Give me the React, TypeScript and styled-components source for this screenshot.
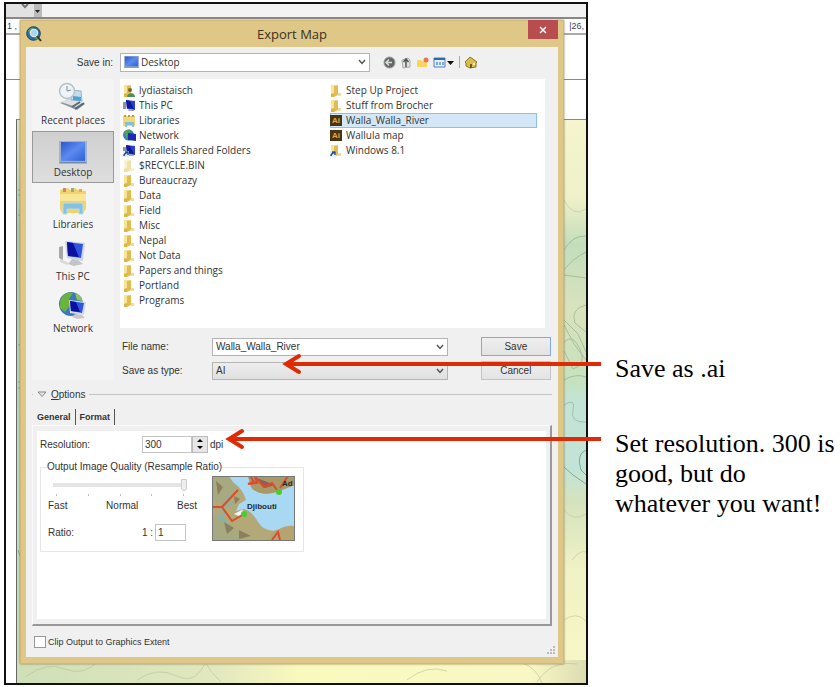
import React from "react";
import styled, { createGlobalStyle, css } from "styled-components";

const ui = `"Open Sans", "Noto Sans", sans-serif`;
const form = `"Liberation Sans", Arial, sans-serif`;

const Global = createGlobalStyle`
  *, *::before, *::after { box-sizing: border-box; }
  body { margin: 0; background: #fff; color: #333; font-family: ${form}; font-size: 10px; }
  button, input, select { font: inherit; color: inherit; margin: 0; padding: 0; }
  ul { list-style: none; margin: 0; padding: 0; }
`;

const Page = styled.main`
  display: grid;
  grid-template-columns: minmax(0, 584fr) minmax(0, 225fr);
  column-gap: 27px;
  align-items: start;
  padding: 2px 0 2px 4px;
`;

const Figure = styled.section`
  position: relative;
  border: 2px solid #111;
  padding: 16px 22px 19px 14px;
  overflow: hidden;
`;

/* Application behind the dialog */
const Backdrop = styled.div`
  position: absolute;
  inset: 0;
  display: flex;
  flex-direction: column;
  background: #fff;
`;
const AppBar = styled.div`
  display: flex;
  height: 15px;
  background: #f3f3f3;
  border-bottom: 2px solid #888;
`;
const AppTool = styled.div`
  display: flex;
  justify-content: center;
  width: 28px;
  padding-left: 10px;
  background: #e2e2e2;
`;
const AppGrip = styled.div`
  display: flex;
  align-items: center;
  width: 8px;
  background: #bbb;
`;
const Ruler = styled.div`
  display: flex;
  justify-content: space-between;
  height: 16px;
  padding: 0 2px 0 1px;
  border-bottom: 2px solid #aaa;
  font-size: 9px;
  line-height: 14px;
  color: #444;
`;
const Guide = styled.div`
  height: 45px;
  border-bottom: 1px solid #888;
`;
const Canvas = styled.div`
  flex: 1;
  display: flex;
  padding: 39px 0 0 10px;
  min-height: 0;
`;
const Terrain = styled.svg`
  flex: 1;
  min-width: 0;
  height: 100%;
  border-top: 1px solid #888;
  border-left: 1px solid #666;
`;

/* Dialog */
const Dialog = styled.div`
  position: relative;
  padding: 0 6px 7px;
  background: #dfc788;
  box-shadow: inset 0 0 0 1px #d2b878, 0 0 2px #8a7b55;
`;
const TitleBar = styled.header`
  display: grid;
  grid-template-columns: 30px 1fr 30px;
  height: 27px;
  align-items: center;
`;
const Title = styled.h1`
  margin: 0;
  text-align: center;
  font: 400 13px/20px ${ui};
  color: #3a3222;
`;
const Close = styled.button`
  align-self: start;
  height: 19px;
  border: 0;
  background: #b84c4f;
  display: grid;
  place-items: center;
`;
const Body = styled.div`
  background: #f0f0f0;
  padding: 5px 6px 6px;
`;
const Location = styled.div`
  display: flex;
  align-items: center;
  height: 20px;
`;
const LocationLabel = styled.label`
  width: 88px;
  padding-right: 7px;
  text-align: right;
`;
const Field = styled.div<{ $shade?: boolean; $h?: number }>`
  display: flex;
  align-items: center;
  height: ${(p) => p.$h ?? 18}px;
  padding: 0 3px 0 3px;
  border: 1px solid #b4b4b4;
  background: ${(p) => (p.$shade ? "linear-gradient(#ededed, #e0e0e0)" : "#fff")};
`;
const LocationField = styled(Field)`
  flex: 0 1 250px;
  min-width: 0;
  gap: 2px;
  font-family: ${ui};
`;
const bare = css`
  appearance: none;
  border: 0;
  outline: 0;
  background: none;
  flex: 1;
  min-width: 0;
`;
const BareSelect = styled.select`${bare}`;
const BareInput = styled.input`${bare}`;
const IconButton = styled.button`
  display: grid;
  place-items: center;
  border: 0;
  background: none;
`;
const Tools = styled.div`
  display: flex;
  align-items: center;
  gap: 4px;
  padding-left: 13px;
`;
const Divider = styled.span`
  width: 1px;
  height: 12px;
  background: #aaa;
`;

const Browser = styled.div`
  display: grid;
  grid-template-columns: 82px minmax(0, 1fr);
  column-gap: 6px;
  margin-top: 7px;
`;
const Places = styled.nav`
  display: flex;
  flex-direction: column;
  background: #f4f4f4;
`;
const Place = styled.button<{ $on?: boolean }>`
  display: flex;
  flex-direction: column;
  align-items: center;
  justify-content: flex-end;
  gap: 1px;
  height: 52px;
  padding-bottom: 2px;
  border: 1px solid ${(p) => (p.$on ? "#999" : "transparent")};
  background: ${(p) => (p.$on ? "linear-gradient(#cfcfcf, #dedede)" : "none")};
  font: 400 10px/15px ${ui};
  white-space: nowrap;
`;
const Files = styled.div`
  display: grid;
  grid-template-columns: 207px 207px;
  align-content: start;
  min-height: 249px;
  margin-right: 7px;
  padding: 4px 0 0 3px;
  background: #fff;
  overflow: hidden;
`;
const FileItem = styled.button<{ $on?: boolean }>`
  display: flex;
  align-items: center;
  gap: 3px;
  width: 100%;
  height: 15px;
  border: 0;
  background: ${(p) => (p.$on ? "#d3e7f6" : "none")};
  box-shadow: ${(p) => (p.$on ? "inset 0 0 0 1px #8cc0e6" : "none")};
  font: 400 10px/15px ${ui};
  text-align: left;
  white-space: nowrap;
`;
const SaveForm = styled.div`
  display: grid;
  grid-template-columns: 90px minmax(0, 235fr) minmax(0, 103fr);
  row-gap: 5px;
  align-items: center;
  padding: 9px 1px 0 2px;
`;
const Action = styled.button<{ $primary?: boolean }>`
  height: 19px;
  margin-left: 33px;
  border: 1px solid ${(p) => (p.$primary ? "#7eaae0" : "#c4c4c4")};
  background: linear-gradient(#efefef, #e3e3e3);
`;

const OptionsBar = styled.div`
  display: flex;
  align-items: center;
  gap: 4px;
  height: 14px;
  margin-top: 7px;
  &::before { content: ""; width: 1px; height: 1px; background: #ccc; }
  &::after { content: ""; flex: 1; height: 1px; background: #c4c4c4; }
`;
const OptionsToggle = styled.button`
  display: flex;
  align-items: center;
  gap: 4px;
  border: 0;
  background: none;
`;
const Tabs = styled.div`
  display: flex;
  margin-top: 8px;
  padding-left: 1px;
`;
const Tab = styled.button`
  height: 16px;
  padding: 0 4px;
  border: 0;
  border-right: 1px solid #555;
  background: none;
  font-size: 9px;
  font-weight: 700;
`;
const Panel = styled.div`
  padding: 5px 4px;
  border: 1px solid #fafafa;
  border-right: 2px solid #999;
  border-bottom: 2px solid #999;
`;
const Sheet = styled.div`
  min-height: 188px;
  padding: 4px 3px;
  background: #fff;
`;
const Resolution = styled.div`
  display: flex;
  align-items: center;
  height: 18px;
`;
const ResolutionLabel = styled.label`
  width: 102px;
`;
const NumberInput = styled.input<{ $w: number }>`
  width: ${(p) => p.$w}px;
  height: 17px;
  padding-left: 2px;
  border: 1px solid #c4c4c4;
  background: #fff;
`;
const Spinner = styled.div`
  display: flex;
  flex-direction: column;
  width: 16px;
  height: 17px;
  margin-right: 2px;
  border: 1px solid #bbb;
  background: #e6e6e6;
`;
const Step = styled(IconButton)`
  flex: 1;
`;
const Quality = styled.fieldset`
  display: flex;
  justify-content: space-between;
  width: 264px;
  margin: 8px 0 0;
  padding: 3px 8px 10px 6px;
  border: 1px solid #e6e6e6;
`;
const Legend = styled.legend`
  height: 12px;
  padding: 0;
  line-height: 12px;
`;
const QualityControls = styled.div`
  width: 152px;
`;
const Slider = styled.input`
  appearance: none;
  display: block;
  width: 134px;
  height: 12px;
  margin: 3px 0 0 6px;
  background: linear-gradient(#e4e4e4, #e4e4e4) center / 100% 4px no-repeat;
  &::-webkit-slider-thumb {
    appearance: none;
    width: 6px;
    height: 12px;
    border: 1px solid #ccc;
    border-radius: 0 0 3px 3px;
    background: #eee;
  }
`;
const Ticks = styled.div`
  display: flex;
  justify-content: space-between;
  width: 128px;
  margin: 3px 0 0 9px;
  span { width: 1px; height: 2px; background: #bbb; }
`;
const Scale = styled.div`
  display: flex;
  justify-content: space-between;
  margin-top: 4px;
  padding: 0 2px 0 1px;
  line-height: 12px;
`;
const Ratio = styled.div`
  display: grid;
  grid-template-columns: 94px 13px 31px;
  align-items: center;
  margin-top: 12px;
  padding-left: 1px;
`;
const Clip = styled.label`
  display: flex;
  align-items: center;
  gap: 2px;
  padding-left: 2px;
  font-size: 9px;
`;
const Check = styled.input`
  appearance: none;
  width: 12px;
  height: 12px;
  border: 1px solid #999;
  background: #fff;
`;
const ClipRow = styled.div`
  display: flex;
  align-items: flex-end;
  justify-content: space-between;
  height: 25px;
  padding-bottom: 3px;
`;
const Grip = styled.svg`
  margin: 0 -4px -7px 0;
`;

/* Callouts */
const Notes = styled.aside`
  display: flex;
  flex-direction: column;
  gap: 45px;
  padding-top: 352px;
  font: 400 26px/30px "Liberation Serif", "Times New Roman", serif;
  color: #000;
`;
const Note = styled.p`
  position: relative;
  margin: 0;
`;
const Arrow = styled.svg`
  position: absolute;
  right: calc(100% + 14px);
  top: -1px;
`;

const Chevron = () => (
  <svg width="8" height="6" viewBox="0 0 8 6"><path d="M1 1l3 3.4L7 1" fill="none" stroke="#555" strokeWidth="1.5" /></svg>
);
const Globe = () => (
  <svg width="16" height="16" viewBox="0 0 16 16">
    <circle cx="7.5" cy="7.5" r="6.8" fill="#2c6f9e" stroke="#23425a" />
    <path d="M2 5c2-3 4-4 6-3l-2 3-2 3zM9 11l3-2 1 2-3 3z" fill="#5ca06b" />
    <circle cx="8" cy="7" r="3.8" fill="#a9d3ee" stroke="#e8f2f8" />
    <path d="M11 10l4 5" stroke="#333" strokeWidth="2" />
  </svg>
);

type Kind = "folder" | "faded" | "user" | "pc" | "library" | "network" | "shared" | "ai" | "link";
const FolderShape = ({ fade }: { fade?: boolean }) => (
  <g opacity={fade ? 0.45 : 1}>
    <path d="M1 1h5v11H1z" fill="#f7e496" />
    <path d="M4 2l4-1v10l-4 2z" fill="#dfbd50" />
    <path d="M1 10l3-1v4H1z" fill="#d9b54a" />
    <path d="M8 9h3v3H8z" fill="#ecdc9d" />
  </g>
);
const Monitor = () => (
  <g>
    <path d="M0 3h3v7H0z" fill="#8b94ac" />
    <path d="M3 1l9 1v9l-8-1z" fill="#2c40d0" />
    <path d="M3 1l4 1 4 8-7-1z" fill="#10189a" />
    <path d="M6 10l5 1v1H5z" fill="#aaa" />
  </g>
);
const FileIcon = ({ kind }: { kind: Kind }) => (
  <svg width="13" height="14" viewBox="0 0 13 14">
    {(kind === "folder" || kind === "faded" || kind === "user" || kind === "link") && <FolderShape fade={kind === "faded"} />}
    {kind === "user" && <g><circle cx="7" cy="6" r="2" fill="#7a6238" /><path d="M4 13c0-5 8-5 8 0z" fill="#4f8f5f" /></g>}
    {kind === "link" && <g><path d="M0 7h6v6H0z" fill="#e8eefa" /><path d="M1 12c0-2 1-3 4-4M2 8h3v3" fill="none" stroke="#234c9c" strokeWidth="1.5" /></g>}
    {kind === "pc" && <Monitor />}
    {kind === "shared" && <g><Monitor /><path d="M0 7h6v6H0z" fill="#e8eefa" /><path d="M1 12c0-2 1-3 4-4M2 8h3v3" fill="none" stroke="#234c9c" strokeWidth="1.5" /></g>}
    {kind === "library" && <g><path d="M0 2h12v10H0z" fill="#efd97f" /><path d="M1 1h2v2H1zM5 1h2v2H5zM9 1h2v2H9z" fill="#b99b48" /><path d="M2 13V8h9v5H9v-2H4v2z" fill="#85bddb" /></g>}
    {kind === "network" && <g><circle cx="5.5" cy="6" r="5.5" fill="#3a84b5" /><path d="M1 4c2-4 6-4 7-3L5 5 4 9z" fill="#55a24f" /><path d="M5 4l8 1v7l-8-1z" fill="#1c2bb0" /></g>}
    {kind === "ai" && <g><path d="M0 1h12v11H0z" fill="#4b3510" /><text x="2" y="9" fontFamily="Liberation Sans" fontSize="8" fontWeight="700" fill="#e5a54b">Ai</text></g>}
  </svg>
);
const DesktopIcon = ({ w, h }: { w: number; h: number }) => (
  <svg width={w} height={h} viewBox="0 0 28 22" preserveAspectRatio="none">
    <defs><linearGradient id="desk" x2="1" y2="1"><stop stopColor="#2d55c8" /><stop offset=".5" stopColor="#5b8bf0" /><stop offset="1" stopColor="#2f5fd4" /></linearGradient></defs>
    <path d="M0 0h28v22H0z" fill="#9fb3cf" /><path d="M2 1h24v18H2z" fill="url(#desk)" /><path d="M1 20h26v1H1z" fill="#6f87a8" />
  </svg>
);
const RecentIcon = () => (
  <svg width="30" height="30" viewBox="0 0 30 30">
    <path d="M2 21l9-4 16 5-8 6z" fill="#8d979d" /><path d="M3 20l9-3 13 4-7 4z" fill="#dce3e6" />
    <path d="M13 8l10 1 1 10-11-1z" fill="#c3dceb" stroke="#9db4c2" /><path d="M15 14l8 1v4l-8-1z" fill="#4ba3d8" />
    <circle cx="9" cy="9" r="7.5" fill="#edf3f7" stroke="#b5c2cb" strokeWidth="1.5" /><path d="M9 4v5l4-1" fill="none" stroke="#7e8f9b" />
    <path d="M17 27l9-6M14 25l8-5" stroke="#5d676e" strokeWidth="2" />
  </svg>
);
const LibraryIcon = () => (
  <svg width="30" height="30" viewBox="0 0 30 30">
    <path d="M2 4l8-2 2 2 5-2 3 2 8 1v18l-3 4H4l-2-4z" fill="#f0d36c" /><path d="M2 8h26v7H2z" fill="#f8e595" />
    <path d="M5 2h3v4H5z" fill="#c98a6b" /><path d="M13 2h3v4h-3z" fill="#93ad72" /><path d="M21 3h3v3h-3z" fill="#d9b24a" />
    <path d="M5 28V19q0-2 2-2h16q2 0 2 2v9h-4v-5H9v5z" fill="#86c0e2" stroke="#b5dcf0" />
  </svg>
);
const PcIcon = () => (
  <svg width="30" height="28" viewBox="0 0 30 28">
    <path d="M1 7l4-1v14l-4-2z" fill="#a7a7a7" /><path d="M7 1l20 2-2 18-16-3z" fill="#cfd4df" /><path d="M9 2l16 2-2 14-13-2z" fill="#2f55e0" /><path d="M9 2l6 1 6 14-11-1z" fill="#0b10a0" />
    <path d="M14 19l6 1 5 4-9 2-6-2z" fill="#c4c4c4" /><path d="M2 19l9 4-2 2-7-3z" fill="#d9d9d9" />
  </svg>
);
const NetworkIcon = () => (
  <svg width="30" height="29" viewBox="0 0 30 29">
    <circle cx="13" cy="13" r="12" fill="#3a79b7" /><path d="M2 12C3 4 9 0 15 2l-4 6 2 5-6 8-5-4z" fill="#6bb33d" /><path d="M17 2c5 2 7 5 7 8l-5-1z" fill="#8bc45b" />
    <path d="M11 9l17 2-2 13-14-2z" fill="#d5dae6" /><path d="M12 10l14 2-2 10-11-2z" fill="#2f55e0" /><path d="M12 10l6 1 4 10-9-1z" fill="#0b10a0" /><path d="M17 23l7 1 3 3-8 1-5-2z" fill="#c8c8c8" />
  </svg>
);

const Toolbar = () => (
  <Tools>
    <IconButton aria-label="Back"><svg width="13" height="13" viewBox="0 0 13 13"><circle cx="6.5" cy="6.5" r="5.5" fill="#666" stroke="#999" /><path d="M6 3.500L3 6.500l3 3M3 6.500h6" fill="none" stroke="#ddd" strokeWidth="1.5" /></svg></IconButton>
    <IconButton aria-label="Up one level"><svg width="12" height="13" viewBox="0 0 12 13"><path d="M2 4l6-2 2 2v7l-7 1z" fill="#e2e2e2" stroke="#aaa" /><path d="M6 11V4M3.500 6L6 3l2.500 3" fill="none" stroke="#555" strokeWidth="1.5" /></svg></IconButton>
    <IconButton aria-label="New folder"><svg width="13" height="13" viewBox="0 0 13 13"><path d="M1 4h4l1 1h5v6H1z" fill="#f7d660" /><circle cx="10" cy="4" r="2.5" fill="#e9774a" /></svg></IconButton>
    <IconButton aria-label="View menu"><svg width="22" height="13" viewBox="0 0 22 13"><path d="M1 2h11v9H1z" fill="#e6f0fb" stroke="#4a7fcb" /><path d="M1 2h11v2H1z" fill="#2f66bd" /><path d="M3 6h2v3H3zM6 6h2v3H6zM9 6h2v3H9z" fill="#7caade" /><path d="M14 5h7l-3.500 4z" fill="#111" /></svg></IconButton>
    <Divider />
    <IconButton aria-label="Home"><svg width="14" height="13" viewBox="0 0 14 13"><path d="M1 6l5-5 7 5-1 1v4l-6 1-4-2V7z" fill="#d9bd4e" stroke="#8a742b" /><path d="M6 8h2v4H6z" fill="#6b5a25" /><path d="M9 7h2v2H9z" fill="#fff4b5" /></svg></IconButton>
  </Tools>
);

const leftFiles: [Kind, string][] = [
  ["user", "lydiastaisch"], ["pc", "This PC"], ["library", "Libraries"], ["network", "Network"],
  ["shared", "Parallels Shared Folders"], ["faded", "$RECYCLE.BIN"], ["folder", "Bureaucrazy"], ["folder", "Data"],
  ["folder", "Field"], ["folder", "Misc"], ["folder", "Nepal"], ["folder", "Not Data"],
  ["folder", "Papers and things"], ["folder", "Portland"], ["folder", "Programs"],
];
const rightFiles: [Kind, string][] = [
  ["folder", "Step Up Project"], ["folder", "Stuff from Brocher"], ["ai", "Walla_Walla_River"], ["ai", "Wallula map"], ["link", "Windows 8.1"],
];
const FileColumn = ({ files }: { files: [Kind, string][] }) => (
  <ul>
    {files.map(([kind, name]) => (
      <li key={name}><FileItem $on={name === "Walla_Walla_River"}><FileIcon kind={kind} />{name}</FileItem></li>
    ))}
  </ul>
);

const Background = () => (
  <Backdrop aria-hidden="true">
    <AppBar>
      <AppTool><svg width="12" height="8" viewBox="0 0 12 8"><path d="M3 0l3 3 3-3" fill="none" stroke="#777" strokeWidth="2" /></svg></AppTool>
      <AppGrip><svg width="8" height="8" viewBox="0 0 8 8"><path d="M1 3h5L3.500 6z" fill="#222" /></svg></AppGrip>
    </AppBar>
    <Ruler><span>1 ,</span><span>|26,</span></Ruler>
    <Guide />
    <Canvas>
      <Terrain viewBox="0 0 569 563" preserveAspectRatio="none">
        <defs>
          <linearGradient id="land" x2="0" y2="1">
            <stop stopColor="#f6f5cd" /><stop offset=".14" stopColor="#eff1c8" /><stop offset=".22" stopColor="#c3ddbb" />
            <stop offset=".34" stopColor="#d9e3bd" /><stop offset=".46" stopColor="#c5e2bc" /><stop offset=".5" stopColor="#c2e4d6" />
            <stop offset=".62" stopColor="#c2e4d6" /><stop offset=".68" stopColor="#d5e3bd" /><stop offset=".8" stopColor="#f1f2c5" /><stop offset="1" stopColor="#f8f7c6" />
          </linearGradient>
          <linearGradient id="coast" x2="0" y2="1"><stop stopColor="#dce8c4" /><stop offset=".2" stopColor="#a9c9b5" /><stop offset=".7" stopColor="#bde0cb" /><stop offset="1" stopColor="#c4dcb4" /></linearGradient>
          <linearGradient id="foot"><stop stopColor="#cfdfb8" /><stop offset=".35" stopColor="#e2e8bf" /><stop offset=".5" stopColor="#faf9bd" /><stop offset=".9" stopColor="#f9f8c5" /><stop offset="1" stopColor="#dcdcb2" /></linearGradient>
        </defs>
        <path d="M0 0h569v563H0z" fill="url(#land)" />
        <path d="M0 0h8v563H0z" fill="url(#coast)" />
        <path d="M0 540h569v23H0z" fill="url(#foot)" />
        <g fill="none" stroke="#8fa78a" opacity=".6">
          <path d="M547 130q9-15 22-14M547 150q8-11 22-18M547 155l22 3M547 200l14 14 8 18M547 205l10 19 12 16M547 222q9-9 16 7t-7 20l-9-18M569 185q-16 4-11 18l11 9M547 260q12-7 22-3M547 285q12-8 9 5t13 12" />
          <path d="M569 330q-10 4-5 20l5 5M547 347l9 8 13 9" stroke="#587f7d" />
          <path d="M547 80q9 18 22 9M547 390q9 12 22 4M555 440q9-11 14-8M547 500q12-9 22 1" stroke="#c5c49b" />
          <path d="M8 557q22-16 40-8t35-9M120 560q20-14 40-4t30-18M188 542q6 11 16 20M390 560q20-16 40-9M505 543q14 4 20 20M520 562q14-22 40-18" stroke="#b9c29c" />
          <path d="M1 70h7M1 75h7M1 95h7M1 225h7M1 262h7M1 268h7M1 430l7 20" stroke="#57897d" />
        </g>
      </Terrain>
    </Canvas>
  </Backdrop>
);

const PreviewMap = () => (
  <svg width="83" height="65" viewBox="0 0 83 65" role="img" aria-label="Djibouti sample map">
    <path d="M0 0h83v65H0z" fill="#b3a878" />
    <path d="M0 0h18l8 15-12 14L0 24zM0 40l20 9 15 16H0z" fill="#a7a981" />
    <path d="M4 5l7 6-5 8zM12 46l10 6-7 6zM27 54l12 6-12 3zM22 20l6 3-5 5z" fill="#8b7f5e" />
    <path d="M5 30l8 5-3 8 6 4M18 19l-4 10 8-2M5 37l5 7" fill="none" stroke="#7fb3b5" strokeWidth="2" />
    <path d="M17 0h19l4 13q12 8 25 2l18-6v41q-10-1-17 4-13 3-20-8-6-11-14-13l-8 2 3-7 7-4q-3-11-13-18z" fill="#a9d8f3" />
    <path d="M36 0h47v9l-18 7q-18 5-26-5z" fill="#a79a68" /><path d="M45 2l18 7-10 3z" fill="#8e5f55" />
    <path d="M83 50v15H54l6-9q10-5 23-6z" fill="#b5a471" />
    <path d="M22 38l8-4 3 2-6 4z" fill="#eef6fa" />
    <path d="M0 31h10l16-17M10 31l10 14 12-7M38 0l4 6-6 2 9-1-2-6 9 10 8-4 5 7M76 0l-8 12M60 64l6-8 2 8" fill="none" stroke="#dd4b28" strokeWidth="2" />
    <circle cx="32" cy="38" r="3" fill="#45cf2e" /><circle cx="67" cy="16" r="3" fill="#45cf2e" />
    <g fontFamily="Liberation Sans" fontWeight="700" fontSize="8" fill="#1c2b33"><text x="35" y="33">Djibouti</text><text x="70" y="10">Ad</text></g>
    <path d="M.5.5h82v64H.5z" fill="none" stroke="#777" />
  </svg>
);

const RedArrow = ({ length }: { length: number }) => (
  <Arrow width={length} height="22" viewBox={`0 0 ${length} 22`} aria-hidden="true">
    <path d={`M4 11H${length}`} stroke="#df2b05" strokeWidth="4" />
    <path d="M17 3L4 11l13 8" fill="none" stroke="#df2b05" strokeWidth="4" strokeLinecap="round" />
  </Arrow>
);

export default function App() {
  return (
    <>
      <Global />
      <Page>
        <Figure>
          <Background />
          <Dialog role="dialog" aria-labelledby="title">
            <TitleBar>
              <Globe />
              <Title id="title">Export Map</Title>
              <Close aria-label="Close"><svg width="8" height="8" viewBox="0 0 8 8"><path d="M1 1l6 6M7 1L1 7" stroke="#fff" strokeWidth="1.5" /></svg></Close>
            </TitleBar>
            <Body>
              <Location>
                <LocationLabel htmlFor="where">Save in:</LocationLabel>
                <LocationField $h={19}>
                  <DesktopIcon w={15} h={12} />
                  <BareSelect id="where"><option>Desktop</option></BareSelect>
                  <Chevron />
                </LocationField>
                <Toolbar />
              </Location>
              <Browser>
                <Places>
                  <Place><RecentIcon />Recent places</Place>
                  <Place $on><DesktopIcon w={28} h={23} />Desktop</Place>
                  <Place><LibraryIcon />Libraries</Place>
                  <Place><PcIcon />This PC</Place>
                  <Place><NetworkIcon />Network</Place>
                </Places>
                <div>
                  <Files><FileColumn files={leftFiles} /><FileColumn files={rightFiles} /></Files>
                  <SaveForm>
                    <label htmlFor="name">File name:</label>
                    <Field><BareInput id="name" defaultValue="Walla_Walla_River" /><IconButton aria-label="Recent names"><Chevron /></IconButton></Field>
                    <Action $primary>Save</Action>
                    <label htmlFor="type">Save as type:</label>
                    <Field $shade><BareSelect id="type"><option>AI</option></BareSelect><Chevron /></Field>
                    <Action>Cancel</Action>
                  </SaveForm>
                </div>
              </Browser>
              <OptionsBar>
                <OptionsToggle>
                  <svg width="10" height="7" viewBox="0 0 10 7"><path d="M1 1h8L5 5.500z" fill="#e4e4e4" stroke="#888" /></svg>
                  <span><u>O</u>ptions</span>
                </OptionsToggle>
              </OptionsBar>
              <Tabs role="tablist">
                <Tab role="tab" aria-selected="true">General</Tab>
                <Tab role="tab" aria-selected="false">Format</Tab>
              </Tabs>
              <Panel role="tabpanel">
                <Sheet>
                  <Resolution>
                    <ResolutionLabel htmlFor="dpi">Resolution:</ResolutionLabel>
                    <NumberInput id="dpi" $w={50} defaultValue="300" />
                    <Spinner>
                      <Step aria-label="Increase"><svg width="6" height="4" viewBox="0 0 6 4"><path d="M0 4l3-3 3 3z" /></svg></Step>
                      <Step aria-label="Decrease"><svg width="6" height="4" viewBox="0 0 6 4"><path d="M0 0l3 3 3-3z" /></svg></Step>
                    </Spinner>
                    <span>dpi</span>
                  </Resolution>
                  <Quality>
                    <Legend>Output Image Quality (Resample Ratio)</Legend>
                    <QualityControls>
                      <Slider type="range" min={0} max={4} defaultValue={4} aria-label="Output image quality" />
                      <Ticks><span /><span /><span /><span /><span /></Ticks>
                      <Scale><span>Fast</span><span>Normal</span><span>Best</span></Scale>
                      <Ratio>
                        <label htmlFor="ratio">Ratio:</label><span>1 :</span>
                        <NumberInput id="ratio" $w={31} defaultValue="1" />
                      </Ratio>
                    </QualityControls>
                    <PreviewMap />
                  </Quality>
                </Sheet>
              </Panel>
              <ClipRow>
                <Clip><Check type="checkbox" />Clip Output to Graphics Extent</Clip>
                <Grip width="9" height="9" viewBox="0 0 9 9"><path d="M6 0h2v2H6zM3 3h2v2H3zM6 3h2v2H6zM0 6h2v2H0zM3 6h2v2H3zM6 6h2v2H6z" fill="#bbb" /></Grip>
              </ClipRow>
            </Body>
          </Dialog>
        </Figure>
        <Notes>
          <Note>Save as .ai<RedArrow length={319} /></Note>
          <Note>Set resolution. 300 is good, but do whatever you want!<RedArrow length={376} /></Note>
        </Notes>
      </Page>
    </>
  );
}
